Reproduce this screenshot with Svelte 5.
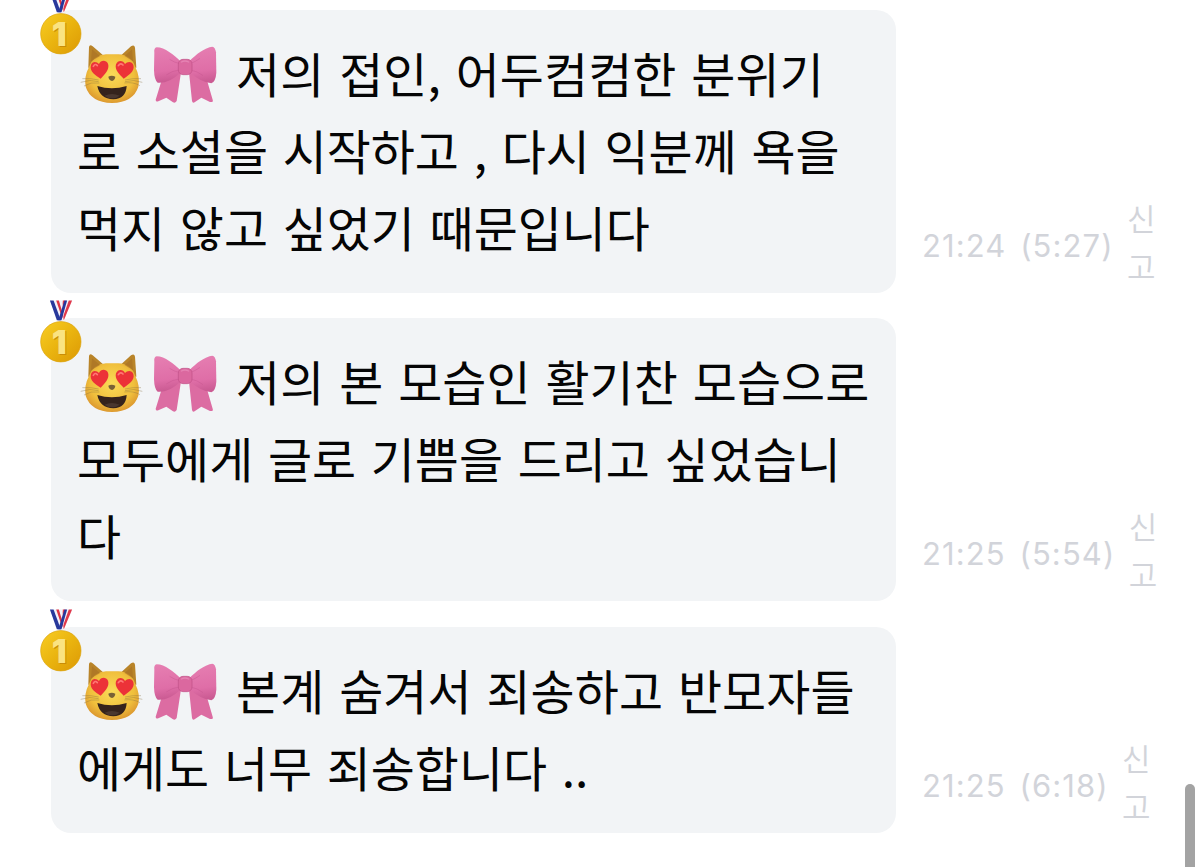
<script lang="ts">
  type Message = {
    lines: string[];
    time: string;
    elapsed: string;
  };

  const messages: Message[] = [
    {
      lines: ['저의 접인, 어두컴컴한 분위기', '로 소설을 시작하고 , 다시 익분께 욕을', '먹지 않고 싶었기 때문입니다'],
      time: '21:24',
      elapsed: '5:27'
    },
    {
      lines: ['저의 본 모습인 활기찬 모습으로', '모두에게 글로 기쁨을 드리고 싶었습니', '다'],
      time: '21:25',
      elapsed: '5:54'
    },
    {
      lines: ['본계 숨겨서 죄송하고 반모자들', '에게도 너무 죄송합니다 ..'],
      time: '21:25',
      elapsed: '6:18'
    }
  ];
</script>

{#snippet medal()}
  <svg class="medal" viewBox="0 0 130 190" aria-hidden="true">
    <defs>
      <linearGradient id="gold" x1="0" y1="0" x2="1" y2="1">
        <stop offset="0" stop-color="#f8cd24" />
        <stop offset="0.5" stop-color="#eab40f" />
        <stop offset="1" stop-color="#dc9905" />
      </linearGradient>
    </defs>
    <path d="M67 1H98L72 61H51Z" fill="#f2f2fa" />
    <path d="M87 1H97L73 59L66 61Z" fill="#e0384a" />
    <path d="M69 1H77L62 50L54 61Z" fill="#e0384a" />
    <path d="M30 1H68L71 61H51Z" fill="#f2f2fa" />
    <path d="M30 1H41L63 61H51Z" fill="#28389b" />
    <path d="M49 1H57L70 44L67 55Z" fill="#df3543" />
    <path d="M74 1H82L65 61H55Z" fill="#26379c" />
    <circle cx="63" cy="126" r="61" fill="url(#gold)" stroke="#dba20a" stroke-width="2" />
    <text class="rank-shadow" x="61" y="165" text-anchor="middle">1</text>
    <text class="rank" x="58" y="162" text-anchor="middle">1</text>
  </svg>
{/snippet}

{#snippet cat()}
  <svg class="emoji" viewBox="15 10 198 186" aria-hidden="true">
    <defs>
      <radialGradient id="fur" cx="0.5" cy="0.42" r="0.58">
        <stop offset="0" stop-color="#fadb58" />
        <stop offset="0.7" stop-color="#f0bf3c" />
        <stop offset="1" stop-color="#dd9a30" />
      </radialGradient>
    </defs>
    <path d="M43 84L45 22Q47 13 56 20L89 48L140 48L171 20Q181 13 183 24L187 84Z" fill="#b98429" />
    <path d="M45 82Q58 46 96 44H133Q172 46 184 82Q199 112 193 141Q178 188 114 190Q50 188 35 141Q30 110 45 82Z" fill="url(#fur)" />
    <path d="M51 65L54 29L78 49Z M177 65L174 29L152 49Z" fill="#a97125" opacity="0.65" />
    <path d="M80 117C66 108 45 96 51 76C55 64 68 65 75 73C80 61 96 60 102 72C108 89 91 105 80 117Z" fill="#ec3238" />
    <path d="M149 117C137 105 121 91 126 74C131 60 148 61 153 73C160 64 175 65 178 76C184 94 163 108 149 117Z" fill="#ec3238" />
    <path d="M58 80Q63 70 70 78M133 78Q139 68 147 76" fill="none" stroke="#ff7774" stroke-width="5" stroke-linecap="round" />
    <path d="M103 111Q113 105 124 111Q123 121 114 124Q105 122 103 111Z" fill="#786136" />
    <path d="M70 139Q113 153 158 139Q156 177 118 179Q77 177 70 139Z" fill="#35231c" />
    <path d="M92 168Q113 158 137 168Q128 176 114 176Q101 176 92 168Z" fill="#4a372f" />
    <path d="M20 128Q47 118 74 126M25 117Q50 115 74 121M30 139Q50 126 76 130M205 128Q180 118 153 126M201 117Q178 115 153 121M198 138Q178 126 151 130" fill="none" stroke="#85703f" stroke-width="1.7" opacity="0.65" />
  </svg>
{/snippet}

{#snippet bow()}
  <svg class="emoji" viewBox="234 10 198 186" aria-hidden="true">
    <defs>
      <linearGradient id="satin" x1="0" y1="0" x2="0.1" y2="1">
        <stop offset="0" stop-color="#e67fb2" />
        <stop offset="0.7" stop-color="#df6ea7" />
        <stop offset="1" stop-color="#cb5b93" />
      </linearGradient>
    </defs>
    <path d="M263 122L245 180Q245 188 253 185L277 174L297 188Q303 192 308 184L321 98H300Z" fill="#dc6ca2" />
    <path d="M345 98L354 184Q356 192 363 187L382 174L408 187Q419 189 416 180L399 122L368 98Z" fill="#dc6ca2" />
    <path d="M318 63C300 47 273 23 248 23Q239 25 241 39L240 92Q241 122 251 129Q285 132 319 99Z" fill="url(#satin)" />
    <path d="M347 63C365 45 393 23 415 21Q424 23 426 38L427 99Q425 126 412 131Q382 129 347 98Z" fill="url(#satin)" />
    <path d="M317 72Q300 68 288 60M316 91Q294 93 278 105M349 72Q364 66 377 57M349 91Q370 94 386 107" stroke="#c4528b" stroke-width="3" fill="none" stroke-linecap="round" opacity="0.4" />
    <rect x="313" y="59" width="41" height="46" rx="14" fill="#db689f" stroke="#bf5087" stroke-width="2" />
    <path d="M322 67Q333 61 344 67" stroke="#e583b3" stroke-width="4" fill="none" stroke-linecap="round" />
  </svg>
{/snippet}

<main class="chat">
  {#each messages as message}
    <article class="message">
      <div class="bubble">
        {@render medal()}
        {#each message.lines as line, i}
          <p class="line">
            {#if i === 0}
              <span class="nickname">{@render cat()}{@render bow()}</span>
            {/if}
            <span class="text" class:first={i === 0}>{line}</span>
          </p>
        {/each}
      </div>
      <div class="meta">
        <time>{message.time} ({message.elapsed})</time>
        <button class="report">신고</button>
      </div>
    </article>
  {/each}
  <div class="scrollbar"></div>
</main>

<style>
  :global(body) {
    background: #fff;
    overflow: hidden;
  }
  .chat {
    position: relative;
    box-sizing: border-box;
    height: 867px;
    padding: 10px 0 0 51px;
    overflow: hidden;
    display: flex;
    flex-direction: column;
    gap: 25.8px;
    font-family: 'Noto Sans CJK KR', sans-serif;
  }
  .message {
    display: flex;
    align-items: flex-end;
    gap: 26px;
  }
  .bubble {
    position: relative;
    box-sizing: border-box;
    width: 845px;
    flex: none;
    padding: 26px;
    border-radius: 20px;
    background: #f2f4f6;
    color: #050505;
  }
  .medal {
    position: absolute;
    left: -11px;
    top: -18px;
    width: 43px;
    height: 63px;
  }
  .rank,
  .rank-shadow {
    font-family: Inter, sans-serif;
    font-size: 100px;
    font-weight: 900;
    fill: #fae381;
  }
  .rank-shadow {
    fill: #c98c08;
  }
  .line {
    display: flex;
    align-items: center;
    height: 76.9px;
    margin: 0;
    font-size: 47.9px;
    line-height: 72px;
    word-spacing: 4px;
    white-space: nowrap;
  }
  .text {
    height: 77px;
  }
  .first {
    letter-spacing: 0.1px;
  }
  .nickname {
    display: flex;
    gap: 7px;
    margin: 0 18px 0 2px;
  }
  .emoji {
    width: 66px;
    height: 62px;
  }
  .meta {
    display: flex;
    align-items: center;
    gap: 12.5px;
    color: #d2d4da;
  }
  time {
    padding-top: 2px;
    font-family: Inter, sans-serif;
    font-size: 31px;
    line-height: 48px;
    letter-spacing: 1.1px;
    word-spacing: 4px;
    white-space: nowrap;
  }
  .report {
    width: 30px;
    padding: 0 0 3px;
    margin-top: -3px;
    border: none;
    background: none;
    color: inherit;
    font-family: inherit;
    font-size: 31px;
    font-weight: 350;
    line-height: 48px;
    word-break: break-all;
    cursor: pointer;
  }
  .scrollbar {
    position: absolute;
    top: 784px;
    left: 1185px;
    width: 10px;
    height: 120px;
    border-radius: 5px;
    background: #a3a3a3;
  }
</style>
